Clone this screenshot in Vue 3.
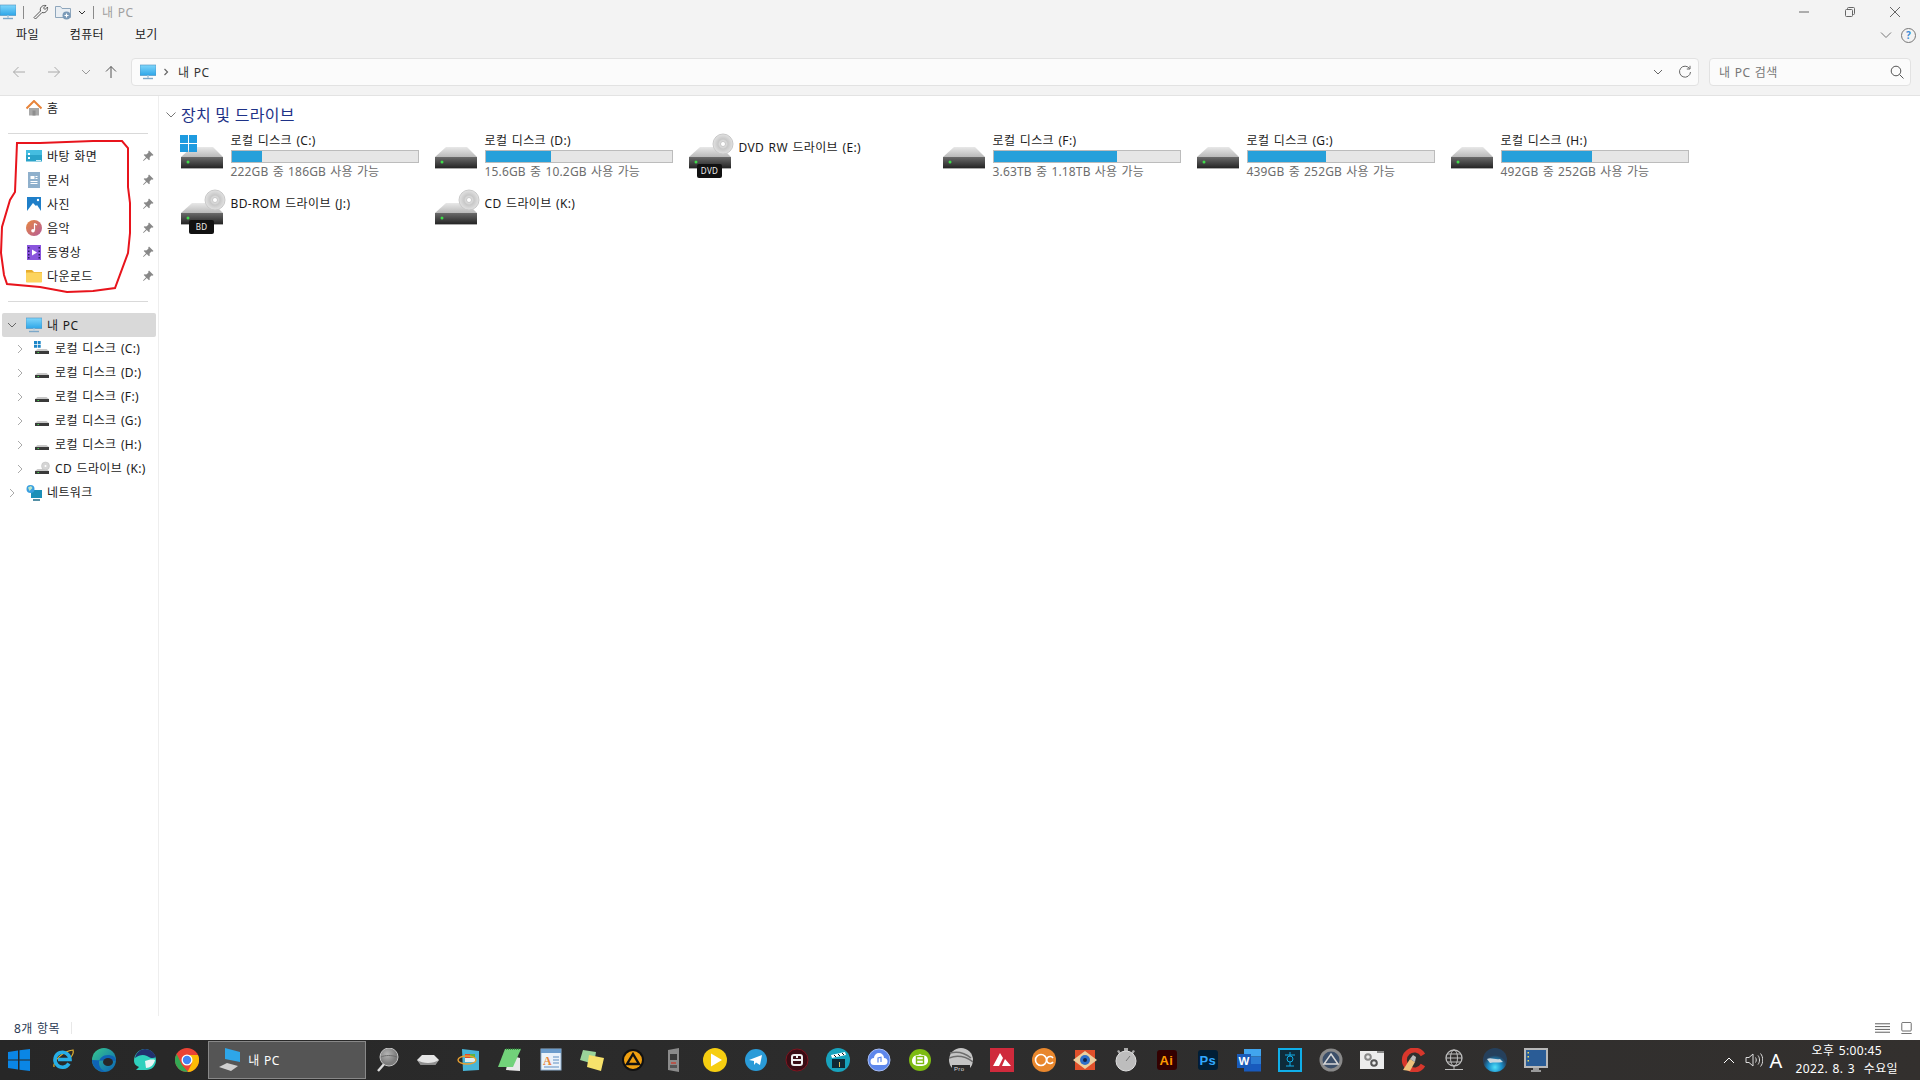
<script setup>
const quickItems = [
  { label: '바탕 화면', icon: 'i-desktop' },
  { label: '문서', icon: 'i-docs' },
  { label: '사진', icon: 'i-photos' },
  { label: '음악', icon: 'i-music' },
  { label: '동영상', icon: 'i-video' },
  { label: '다운로드', icon: 'i-folder' },
]

const treeDrives = [
  { label: '로컬 디스크 (C:)', icon: 'i-mini-win' },
  { label: '로컬 디스크 (D:)', icon: 'i-mini-drive' },
  { label: '로컬 디스크 (F:)', icon: 'i-mini-drive' },
  { label: '로컬 디스크 (G:)', icon: 'i-mini-drive' },
  { label: '로컬 디스크 (H:)', icon: 'i-mini-drive' },
  { label: 'CD 드라이브 (K:)', icon: 'i-mini-cd' },
]

const drives = [
  { name: '로컬 디스크 (C:)', used: 16.5, free: '222GB 중 186GB 사용 가능', icon: 'd-win' },
  { name: '로컬 디스크 (D:)', used: 35, free: '15.6GB 중 10.2GB 사용 가능', icon: 'd-hdd' },
  { name: 'DVD RW 드라이브 (E:)', icon: 'd-disc', badge: 'DVD' },
  { name: '로컬 디스크 (F:)', used: 66.5, free: '3.63TB 중 1.18TB 사용 가능', icon: 'd-hdd' },
  { name: '로컬 디스크 (G:)', used: 42, free: '439GB 중 252GB 사용 가능', icon: 'd-hdd' },
  { name: '로컬 디스크 (H:)', used: 48.5, free: '492GB 중 252GB 사용 가능', icon: 'd-hdd' },
  { name: 'BD-ROM 드라이브 (J:)', icon: 'd-disc', badge: 'BD' },
  { name: 'CD 드라이브 (K:)', icon: 'd-disc' },
]

const pinnedLeft = ['t-ie', 't-edge', 't-whale', 't-chrome']
const pinnedRight = [
  't-lens', 't-drive', 't-setup', 't-notepad', 't-wordpad', 't-notes', 't-aimp', 't-device',
  't-play', 't-telegram', 't-ar', 't-clap', 't-cloud', 't-green', 't-pro', 't-red', 't-oc',
  't-eye', 't-watch', 't-ai', 't-ps', 't-word', 't-frame', 't-steel', 't-gear', 't-ccleaner',
  't-net', 't-earth', 't-screen',
]
</script>

<template>
  <div class="window">
    <svg class="defs" width="0" height="0" aria-hidden="true">
      <defs>
        <linearGradient id="g-front" x1="0" y1="0" x2="0" y2="1"><stop offset="0" stop-color="#6a6a6a" /><stop offset="1" stop-color="#1f1f1f" /></linearGradient>
        <linearGradient id="g-top" x1="0" y1="0" x2="0" y2="1"><stop offset="0" stop-color="#e8e8e8" /><stop offset="1" stop-color="#b9b9b9" /></linearGradient>
        <linearGradient id="g-screen" x1="0" y1="0" x2="0" y2="1"><stop offset="0" stop-color="#7fd6fb" /><stop offset="1" stop-color="#2ea6e8" /></linearGradient>
        <linearGradient id="g-music" x1="0" y1="0" x2="1" y2="1"><stop offset="0" stop-color="#e8883f" /><stop offset="1" stop-color="#b55c9a" /></linearGradient>
        <linearGradient id="g-edge" x1="0" y1="0" x2="1" y2="1"><stop offset="0" stop-color="#37c98c" /><stop offset="1" stop-color="#0b62b8" /></linearGradient>
        <radialGradient id="g-disc"><stop offset="0" stop-color="#fff" /><stop offset=".5" stop-color="#c8c8c8" /><stop offset="1" stop-color="#e2e2e2" /></radialGradient>
        <radialGradient id="g-lens" cx=".4" cy=".35"><stop offset="0" stop-color="#b5b5b5" /><stop offset="1" stop-color="#7d7d7d" /></radialGradient>
        <radialGradient id="g-earth" cx=".5" cy=".8"><stop offset="0" stop-color="#4fe0fa" /><stop offset=".55" stop-color="#1b8fc9" /><stop offset="1" stop-color="#25405c" /></radialGradient>

        <!-- 탐색기 드라이브 아이콘 -->
        <symbol id="d-hdd" viewBox="0 0 48 48">
          <path d="M14 17h21l10 10H3z" fill="url(#g-top)" />
          <rect x="3" y="27" width="42" height="12" fill="url(#g-front)" />
          <path d="M3 38.500h42" stroke="#aaa" />
          <circle cx="10" cy="32" r="1.500" fill="#3fdc4a" />
        </symbol>
        <symbol id="d-win" viewBox="0 0 48 48">
          <use href="#d-hdd" width="48" height="48" />
          <path d="M2 5h8v8H2zM11 5h8v8h-8zM2 14h8v8H2zM11 14h8v8h-8z" fill="#1e9be0" />
        </symbol>
        <symbol id="d-disc" viewBox="0 0 48 48">
          <use href="#d-hdd" width="48" height="48" />
          <circle cx="37" cy="14" r="10" fill="url(#g-disc)" stroke="#c9c9c9" />
          <circle cx="37" cy="14" r="2.500" fill="#fff" stroke="#aaa" stroke-width=".6" />
        </symbol>

        <!-- 트리 아이콘 -->
        <symbol id="i-pc" viewBox="0 0 16 16">
          <rect x="0" y="1" width="16" height="10.500" fill="url(#g-screen)" stroke="#4a8fc0" stroke-width=".6" />
          <path d="M3 14.500h10" stroke="#7da7c7" stroke-width="1.400" />
          <path d="M7 11.500h2v2.500H7z" fill="#b6cfe0" />
        </symbol>
        <symbol id="i-home" viewBox="0 0 16 16">
          <path d="M3 8h10v7.500H3z" fill="#a8a8a8" />
          <path d="M6.500 10.500h3v5h-3z" fill="#8e8e8e" />
          <path d="M.5 8.500 8 1l7.500 7.500" fill="none" stroke="#e8843a" stroke-width="2" />
        </symbol>
        <symbol id="i-desktop" viewBox="0 0 16 16">
          <rect y="2" width="16" height="11.500" fill="#2aa3c9" />
          <path d="M0 2h16v5H0z" fill="#45bde0" />
          <path d="M2 5h2v2H2zM2 9h2v2H2z" fill="#fff" />
          <path d="M10 12h5v1h-5z" fill="#cfeef7" />
        </symbol>
        <symbol id="i-docs" viewBox="0 0 16 16">
          <rect x="2" y="0" width="12" height="16" fill="#8fb0cc" />
          <path d="M4.500 4h4v3h-4zM9.500 4h2v1h-2zM9.500 6h2v1h-2zM4.500 9h7v1h-7zM4.500 11h7v1h-7z" fill="#fff" />
        </symbol>
        <symbol id="i-photos" viewBox="0 0 16 16">
          <rect x="1" y="1" width="14" height="14" fill="#1f7fc9" />
          <path d="M1 15 7 7l3 3 1-1 4 6z" fill="#fff" />
          <circle cx="12" cy="4" r="1.200" fill="#fff" />
        </symbol>
        <symbol id="i-music" viewBox="0 0 16 16">
          <circle cx="8" cy="8" r="8" fill="url(#g-music)" />
          <path d="M8.500 3.500v7" stroke="#fff" stroke-width="1.200" />
          <circle cx="7" cy="10.800" r="1.800" fill="#fff" />
          <path d="M8.500 3.500 11 5" stroke="#fff" stroke-width="1.200" />
        </symbol>
        <symbol id="i-video" viewBox="0 0 16 16">
          <rect x="1" y="1" width="14" height="15" fill="#8a55dd" />
          <path d="M2 3h1.500v1.500H2zM2 6.500h1.500V8H2zM2 10h1.500v1.500H2zM2 13h1.500v1.500H2zM12.500 3H14v1.500h-1.500zM12.500 6.500H14V8h-1.500zM12.500 10H14v1.500h-1.500zM12.500 13H14v1.500h-1.500z" fill="#2b1a66" />
          <path d="M6 5.500 11 8.500 6 11.500z" fill="#fff" />
        </symbol>
        <symbol id="i-folder" viewBox="0 0 16 16">
          <path d="M0 2h6l2 2h8v3H0z" fill="#e8ae2e" />
          <rect y="4.500" width="16" height="10" rx=".8" fill="#fcd45f" />
        </symbol>
        <symbol id="i-network" viewBox="0 0 16 16">
          <rect x="5" y="5" width="11" height="8" fill="#1b8fb8" />
          <path d="M7 15h7" stroke="#1b6b88" stroke-width="1.500" />
          <circle cx="4.500" cy="4" r="4" fill="#3a9fe0" />
          <path d="M2 2.500 5 1l1.500 2-3 3z" fill="#bfe6c6" />
        </symbol>
        <symbol id="i-mini-drive" viewBox="0 0 16 16">
          <path d="M3.500 8h9l2.500 2H1z" fill="#c8c8c8" />
          <rect x="1" y="10" width="14" height="3" fill="#3a3a3a" />
          <path d="M3.500 11.500H5" stroke="#43d04d" />
        </symbol>
        <symbol id="i-mini-win" viewBox="0 0 16 16">
          <use href="#i-mini-drive" width="16" height="16" />
          <path d="M0 0h3v3H0zM3.700 0h3v3h-3zM0 3.700h3v3H0zM3.700 3.700h3v3h-3z" fill="#1b85c7" />
        </symbol>
        <symbol id="i-mini-cd" viewBox="0 0 16 16">
          <use href="#i-mini-drive" width="16" height="16" />
          <circle cx="11.500" cy="5" r="4" fill="#d5d5d5" stroke="#bdbdbd" stroke-width=".5" />
          <circle cx="11.500" cy="5" r="1" fill="#fff" />
        </symbol>

        <!-- 작업 표시줄 아이콘 -->
        <symbol id="t-ie" viewBox="0 0 24 24">
          <path d="M3 19C2 13 12 3 22 2c1 3-1 6-3 8" fill="none" stroke="#e0b030" stroke-width="1.200" />
          <path d="M18 15.500a7.500 7.500 0 1 1 1-4H7" fill="none" stroke="#27aee6" stroke-width="3.600" />
        </symbol>
        <symbol id="t-edge" viewBox="0 0 24 24">
          <circle cx="12" cy="12" r="12" fill="url(#g-edge)" />
          <path d="M24 13c0-4-4-6-8-6-5 0-9 3-9 8 0 4 3 8 8 9-8 1-15-5-15-12" fill="#0f63b5" />
          <ellipse cx="16" cy="14" rx="5" ry="4" fill="#282828" />
        </symbol>
        <symbol id="t-whale" viewBox="0 0 24 24">
          <path d="M1 13C1 6 6 1 12 1s11 5 11 11-4 10-10 10H3l3-3c-3-1-5-3-5-6z" fill="#2fd0bd" />
          <path d="M2 10C3 5 7 1 12 1c5 0 9 3 11 8-3 2-6 1-9-1-4-2-8-1-12 2z" fill="#22306f" />
          <path d="M12 13c3-1 7-2 10-1-1 5-5 8-9 8z" fill="#eaf6f5" />
        </symbol>
        <symbol id="t-chrome" viewBox="0 0 24 24">
          <circle cx="12" cy="12" r="12" fill="#ea4335" />
          <path d="M1.600 6 7 17l6 7h-1A12 12 0 0 1 1.600 6z" fill="#34a853" />
          <path d="M12 7h11a12 12 0 0 1-10.500 17L17 15z" fill="#fbbc05" />
          <circle cx="12" cy="12" r="5.500" fill="#fff" />
          <circle cx="12" cy="12" r="4.200" fill="#4285f4" />
        </symbol>
        <symbol id="t-lens" viewBox="0 0 24 24">
          <path d="M3 23l7-8" stroke="#ddd" stroke-width="2.400" />
          <circle cx="14" cy="9" r="9" fill="url(#g-lens)" stroke="#c6c6c6" />
          <path d="M6 9c4-2 11-2 16 0" fill="none" stroke="#6d6d6d" />
        </symbol>
        <symbol id="t-drive" viewBox="0 0 24 24">
          <path d="M6 7h12l5 5-4 5H5l-4-5z" fill="#e5e5e5" />
          <path d="M1 12c6 4 16 4 22 0l-4 5H5z" fill="#8f8f8f" />
        </symbol>
        <symbol id="t-setup" viewBox="0 0 24 24">
          <path d="M5 1 22 3v19L6 23z" fill="#48b5d8" />
          <path d="M8 6h10v8H8z" fill="#dfeef3" />
          <path d="M8 6h5v4H8z" fill="#e04a2a" /><path d="M13 6h5v4h-5z" fill="#63b43f" />
          <ellipse cx="10" cy="12" rx="9" ry="4" fill="none" stroke="#e8a032" stroke-width="1.400" />
        </symbol>
        <symbol id="t-notepad" viewBox="0 0 24 24">
          <path d="M11 7 22 10v13l-14-1z" fill="#e8e8e8" />
          <path d="M7 1h16l-8 18H0z" fill="#72d27a" />
          <path d="M8 1h14.500" stroke="#2f7a38" stroke-dasharray="1 1" stroke-width="1.500" />
        </symbol>
        <symbol id="t-wordpad" viewBox="0 0 24 24">
          <rect x="2" y="1" width="20" height="21" fill="#e9f2fa" stroke="#8fb1d2" />
          <path d="M2 1h20v4H2z" fill="#6b9ccc" />
          <text x="4" y="17" font-size="12" font-weight="700" fill="#e8893a" font-family="Liberation Serif, serif">A</text>
          <path d="M14 9h6M14 12h6M14 15h6M5 19h15" stroke="#5e8fc2" />
        </symbol>
        <symbol id="t-notes" viewBox="0 0 24 24">
          <path d="M3 2 16 4 14 16 0 12z" fill="#9ad49a" />
          <path d="M9 7 24 10 21 23 7 19z" fill="#f7e26b" />
        </symbol>
        <symbol id="t-aimp" viewBox="0 0 24 24">
          <circle cx="12" cy="12" r="11" fill="#111" />
          <circle cx="12" cy="12" r="9" fill="#f0a010" />
          <path d="M12 6 18 16H6z" fill="none" stroke="#111" stroke-width="2.400" />
        </symbol>
        <symbol id="t-device" viewBox="0 0 24 24">
          <path d="M6 2 17 0v24L6 22z" fill="#8b8b8b" />
          <path d="M8 6h7v6H8z" fill="#3a3a3a" /><path d="M9 14h5v2H9z" fill="#b5564c" /><path d="M8 17h7v3H8z" fill="#555" />
        </symbol>
        <symbol id="t-play" viewBox="0 0 24 24">
          <circle cx="12" cy="12" r="12" fill="#f6ce11" />
          <path d="M8 5.500 19 12 8 18.500z" fill="#fff" />
        </symbol>
        <symbol id="t-telegram" viewBox="0 0 24 24">
          <circle cx="12" cy="12" r="11" fill="#2a9bd8" />
          <path d="M5 12 18 7 16 17 12 14.500 10 17 10 13z" fill="#fff" />
        </symbol>
        <symbol id="t-ar" viewBox="0 0 24 24">
          <circle cx="12" cy="12" r="11" fill="#3a0d14" stroke="#7d1520" />
          <rect x="7" y="7" width="10" height="10" rx="2" fill="none" stroke="#eee" stroke-width="2" />
          <path d="M7 12h10M12 7v3" stroke="#eee" stroke-width="2" />
        </symbol>
        <symbol id="t-clap" viewBox="0 0 24 24">
          <circle cx="12" cy="12" r="12" fill="#18a3bd" />
          <path d="M6 11h13v9H6z" fill="#102a35" />
          <path d="M5 7 19 4l1 3-14 3z" fill="#fff" />
          <path d="M8 7l2 2M12 6l2 2M16 5l2 2" stroke="#111" />
          <path d="M13 14h1v5h-1z" fill="#e0c060" />
        </symbol>
        <symbol id="t-cloud" viewBox="0 0 24 24">
          <circle cx="12" cy="12" r="11" fill="#5d87ec" stroke="#a7bef5" />
          <path d="M7 17a3.500 3.500 0 0 1 0-7 5 5 0 0 1 10 0 3.500 3.500 0 0 1 0 7z" fill="#fff" />
          <path d="M11 14.500V10l3-.8V14" fill="none" stroke="#5d87ec" stroke-width="1.200" />
        </symbol>
        <symbol id="t-green" viewBox="0 0 24 24">
          <circle cx="12" cy="12" r="11" fill="#7dbb12" />
          <path d="M4 13c0-4 3-6 6-6l2-1 2 1c4 0 6 2 6 6 0 3-3 5-8 5s-8-2-8-5z" fill="#fff" />
          <rect x="8.500" y="8.500" width="7" height="7" fill="none" stroke="#7dbb12" stroke-width="1.400" />
          <path d="M8.500 12h7" stroke="#7dbb12" stroke-width="1.400" />
        </symbol>
        <symbol id="t-pro" viewBox="0 0 24 24">
          <circle cx="12" cy="12" r="12" fill="#c5c5c5" />
          <path d="M0 10c8-3 16-2 24 4M1 5c8-2 15 0 21 5" stroke="#6d6d6d" fill="none" stroke-width="1.500" />
          <rect x="3" y="17" width="18" height="7" fill="#2c2c2c" />
          <text x="5" y="23" font-size="6" fill="#ddd" font-family="Liberation Sans, sans-serif">Pro</text>
        </symbol>
        <symbol id="t-red" viewBox="0 0 24 24">
          <rect width="24" height="24" fill="#cf2a3c" />
          <path d="M3 18 10 5l3 5-4 8zM12 18l3-7 6 7z" fill="#fff" />
        </symbol>
        <symbol id="t-oc" viewBox="0 0 24 24">
          <circle cx="12" cy="12" r="12" fill="#e8872d" />
          <circle cx="9" cy="12" r="5.500" fill="none" stroke="#fff" stroke-width="1.600" />
          <path d="M21 10a3.500 3.500 0 1 0 0 4" fill="none" stroke="#fff" stroke-width="1.600" />
        </symbol>
        <symbol id="t-eye" viewBox="0 0 24 24">
          <rect x="2" y="2" width="20" height="20" fill="#e0502a" />
          <path d="M0 12 12 3l12 9-12 9z" fill="#eccf9f" />
          <circle cx="12" cy="12" r="5" fill="#2f6fc9" />
          <circle cx="12" cy="12" r="2" fill="#12234a" />
        </symbol>
        <symbol id="t-watch" viewBox="0 0 24 24">
          <path d="M10 0h4v3h-4zM3 3l2-1 2 3-2 1zM21 3l-2-1-2 3 2 1z" fill="#aaa" />
          <circle cx="12" cy="13" r="10" fill="#bdbdbd" stroke="#e0e0e0" />
          <path d="M12 13 16 8" stroke="#777" />
        </symbol>
        <symbol id="t-ai" viewBox="0 0 24 24">
          <rect x="2" y="2" width="20" height="20" rx="3" fill="#330000" />
          <text x="4.500" y="17" font-size="13" font-weight="700" fill="#ff9a00" font-family="Liberation Sans, sans-serif">Ai</text>
        </symbol>
        <symbol id="t-ps" viewBox="0 0 24 24">
          <rect x="2" y="2" width="20" height="20" rx="3" fill="#001e36" />
          <text x="3.500" y="17" font-size="13" font-weight="700" fill="#31a8ff" font-family="Liberation Sans, sans-serif">Ps</text>
        </symbol>
        <symbol id="t-word" viewBox="0 0 24 24">
          <rect x="7" y="1" width="17" height="7.500" fill="#41a5ee" />
          <rect x="7" y="8.500" width="17" height="7.500" fill="#2b7cd3" />
          <rect x="7" y="16" width="17" height="7.500" fill="#185abd" />
          <rect y="6" width="14" height="14" fill="#1a5bb8" />
          <text x="1.500" y="17" font-size="11.500" font-weight="700" fill="#fff" font-family="Liberation Sans, sans-serif">W</text>
        </symbol>
        <symbol id="t-frame" viewBox="0 0 24 24">
          <rect x="1" y="1" width="22" height="22" fill="#0e2b3a" stroke="#10aee8" stroke-width="2" />
          <circle cx="12" cy="11" r="3" fill="none" stroke="#10aee8" />
          <path d="M7 7h10M12 4v4M8 18h8M12 14v4" stroke="#10aee8" />
        </symbol>
        <symbol id="t-steel" viewBox="0 0 24 24">
          <circle cx="12" cy="12" r="11.500" fill="#8a8a8a" />
          <circle cx="12" cy="12" r="8.500" fill="#3c4f69" />
          <path d="M12 6 19 16H5z" fill="none" stroke="#d8d8d8" stroke-width="1.500" />
        </symbol>
        <symbol id="t-gear" viewBox="0 0 24 24">
          <rect y="3" width="24" height="18" fill="#ececec" />
          <path d="M17 3h7v2h-7z" fill="#888" />
          <circle cx="8" cy="9" r="2.800" fill="none" stroke="#8a8a8a" stroke-width="2" />
          <circle cx="14" cy="15" r="2.800" fill="none" stroke="#555" stroke-width="2" />
        </symbol>
        <symbol id="t-ccleaner" viewBox="0 0 24 24">
          <path d="M22 7a10 10 0 1 0 0 10" fill="none" stroke="#d8372c" stroke-width="5" />
          <path d="M2 22 9 11l5 3-5 9z" fill="#eec17b" />
          <path d="M9 11l3-4 3 2-1 5z" fill="#bbb" />
        </symbol>
        <symbol id="t-net" viewBox="0 0 24 24">
          <circle cx="12" cy="10" r="8" fill="none" stroke="#bdbdbd" stroke-width="1.300" />
          <ellipse cx="12" cy="10" rx="3.500" ry="8" fill="none" stroke="#bdbdbd" />
          <path d="M4 10h16M5 6h14M5 14h14M12 18v3M3 21.500h18" stroke="#bdbdbd" />
        </symbol>
        <symbol id="t-earth" viewBox="0 0 24 24">
          <circle cx="12" cy="12" r="12" fill="url(#g-earth)" />
          <path d="M4 11c4-2 8 1 13 0l3 3c-5 1-9 0-13 1z" fill="#c9d6de" />
        </symbol>
        <symbol id="t-screen" viewBox="0 0 24 24">
          <rect width="24" height="20" fill="#b8b8b8" />
          <rect x="2" y="2" width="20" height="16" fill="#2a5c96" />
          <path d="M3.500 4h1.500v1.500H3.500zM3.500 8h1.500v1.500H3.500zM3.500 12h1.500v1.500H3.500z" fill="#e8d85a" />
          <path d="M9 20h6v2H9zM7 22h10v2H7z" fill="#999" />
        </symbol>
      </defs>
    </svg>

    <div class="titlebar">
      <div class="quick">
        <svg class="ic16"><use href="#i-pc" /></svg>
        <span class="pipe" />
        <svg class="qa wrench" viewBox="0 0 16 16" fill="none" stroke="#555" stroke-width="1">
          <path d="M1 13.500 7.500 7C6.500 4 9 .8 13 1.500L10.500 4l1.500 1.500L14.500 3c.7 4-2.500 6.500-5.500 5.500L2.500 15z" />
        </svg>
        <svg class="qa" viewBox="0 0 16 16">
          <path d="M.5 2.500h5l1.500 2h8.500v9H.5z" fill="#e9eef3" stroke="#8ea6bc" />
          <circle cx="11.500" cy="11.500" r="4" fill="#7a9ab8" />
          <path d="M9.500 11.500h4M11.500 9.500v4" stroke="#fff" stroke-width="1.200" />
        </svg>
        <svg class="mini-chev" viewBox="0 0 8 5"><path d="M1 1l3 3 3-3" fill="none" stroke="#333" stroke-width="1" /></svg>
        <span class="pipe last" />
        <span class="title-text">내 PC</span>
      </div>
      <div class="win-ctrls">
        <svg class="wc" viewBox="0 0 12 12"><path d="M1 6h10" stroke="#666" /></svg>
        <svg class="wc" viewBox="0 0 12 12" fill="none" stroke="#666"><rect x="1.500" y="3.500" width="7" height="7" rx="1" /><path d="M3.500 3.500v-1a1 1 0 0 1 1-1h5a1 1 0 0 1 1 1v5a1 1 0 0 1-1 1h-1" /></svg>
        <svg class="wc" viewBox="0 0 12 12"><path d="M1 1l10 10M11 1 1 11" stroke="#666" /></svg>
      </div>
    </div>

    <div class="menubar">
      <span class="menu">파일</span>
      <span class="menu">컴퓨터</span>
      <span class="menu">보기</span>
      <div class="ribbon-right">
        <svg class="ribbon-chev" viewBox="0 0 12 8"><path d="M1 1.500l5 5 5-5" fill="none" stroke="#777" /></svg>
        <span class="help">?</span>
      </div>
    </div>

    <div class="addressbar">
      <svg class="nav-btn" viewBox="0 0 14 14" fill="none" stroke="#aaa"><path d="M13 7H1.500M6.500 2l-5 5 5 5" /></svg>
      <svg class="nav-btn fwd" viewBox="0 0 14 14" fill="none" stroke="#aaa"><path d="M1 7h11.500M7.500 2l5 5-5 5" /></svg>
      <svg class="nav-down" viewBox="0 0 10 6" fill="none" stroke="#999"><path d="M1 1l4 4 4-4" /></svg>
      <svg class="nav-btn up" viewBox="0 0 14 14" fill="none" stroke="#555"><path d="M7 13V1.500M2 6.500l5-5 5 5" /></svg>
      <div class="address">
        <svg class="ic16"><use href="#i-pc" /></svg>
        <svg class="crumb" viewBox="0 0 6 8" fill="none" stroke="#666" stroke-width="1.200"><path d="M1.500 1l3 3-3 3" /></svg>
        <span class="path">내 PC</span>
        <svg class="addr-chev" viewBox="0 0 10 6" fill="none" stroke="#666"><path d="M1 1l4 4 4-4" /></svg>
        <svg class="refresh" viewBox="0 0 14 14" fill="none" stroke="#666"><path d="M11.500 3.500A5.500 5.500 0 1 0 12.500 7M12 .8v3.200H8.800" /></svg>
      </div>
      <div class="search">
        <span>내 PC 검색</span>
        <svg class="search-ic" viewBox="0 0 14 14" fill="none" stroke="#555"><circle cx="6" cy="6" r="4.800" /><path d="M9.500 9.500l4 4" /></svg>
      </div>
    </div>

    <div class="main">
      <aside class="side">
        <div class="row top"><svg class="ic16"><use href="#i-home" /></svg><span>홈</span></div>
        <div class="divider first" />
        <div v-for="q in quickItems" :key="q.label" class="row top">
          <svg class="ic16"><use :href="'#' + q.icon" /></svg>
          <span>{{ q.label }}</span>
          <svg class="pin" viewBox="0 0 12 12"><path d="M7 .5 11.500 5l-1.200.8-1-.2L7.500 7.800 7.800 9.500 7 10.300 4.800 8 1.500 11 1 10.500 4 7.200 1.700 5l.8-.8 1.700.3L6.400 2.700l-.2-1z" fill="#888" /></svg>
        </div>
        <div class="divider second" />
        <div class="row top selected">
          <svg class="tw" viewBox="0 0 10 10" fill="none" stroke="#666"><path d="M1 3l4 4 4-4" /></svg>
          <svg class="ic16"><use href="#i-pc" /></svg>
          <span>내 PC</span>
        </div>
        <div v-for="d in treeDrives" :key="d.label" class="row child">
          <svg class="tw" viewBox="0 0 10 10" fill="none" stroke="#aaa"><path d="M3 1l4 4-4 4" /></svg>
          <svg class="ic16"><use :href="'#' + d.icon" /></svg>
          <span>{{ d.label }}</span>
        </div>
        <div class="row top network">
          <svg class="tw" viewBox="0 0 10 10" fill="none" stroke="#aaa"><path d="M3 1l4 4-4 4" /></svg>
          <svg class="ic16"><use href="#i-network" /></svg>
          <span>네트워크</span>
        </div>

        <!-- 스크린샷에 손으로 그린 빨간 표시 -->
        <svg class="scribble" width="140" height="175" viewBox="0 0 140 175">
          <path d="M17 23 40 23 93 21 122 21 128 28 128 67 130 83 130 113 128 133 115 168 93 171 67 172 40 167 7 164 4 155 1 133 2 107 10 80 15 72z" fill="none" stroke="#e8141c" stroke-width="2" />
        </svg>
      </aside>

      <section class="content">
        <div class="group">
          <svg class="group-chev" viewBox="0 0 10 6" fill="none" stroke="#777"><path d="M.5.5 5 5 9.500.5" /></svg>
          <span>장치 및 드라이브</span>
        </div>
        <div class="tiles">
          <div v-for="d in drives" :key="d.name" class="tile">
            <div class="tile-icon">
              <svg width="48" height="48"><use :href="'#' + d.icon" /></svg>
              <span v-if="d.badge" class="badge">{{ d.badge }}</span>
            </div>
            <div class="tile-body" :class="{ plain: d.used === undefined }">
              <div class="tile-name">{{ d.name }}</div>
              <template v-if="d.used !== undefined">
                <div class="bar"><div class="bar-fill" :style="{ width: d.used + '%' }" /></div>
                <div class="tile-free">{{ d.free }}</div>
              </template>
            </div>
          </div>
        </div>
      </section>
    </div>

    <div class="statusbar">
      <span class="count">8개 항목</span>
      <span class="status-sep" />
      <div class="views">
        <svg class="view" viewBox="0 0 16 12" stroke="#555"><path d="M0 1.500h16M0 4.500h16M0 7.500h16M0 10.500h16" /></svg>
        <svg class="view" viewBox="0 0 14 14" fill="none" stroke="#555"><rect x="1.500" y=".5" width="11" height="10" rx="1" /><path d="M1 13.500h12" /></svg>
      </div>
    </div>

    <footer class="taskbar">
      <svg class="start" viewBox="0 0 22 22"><path d="M0 3 10 1.500V10.500H0zM11.500 1.300 22 0V10.500H11.500zM0 11.500H10V20.500L0 19zM11.500 11.500H22V22L11.500 20.700z" fill="#0a86e6" /></svg>
      <div v-for="t in pinnedLeft" :key="t" class="tb-icon"><svg width="24" height="24"><use :href="'#' + t" /></svg></div>
      <div class="task-btn">
        <svg class="task-ic" viewBox="0 0 24 24">
          <path d="M7 0 22 4v10L7 11z" fill="#2ea6e8" />
          <path d="M1 19l8-4 11 3-7 5z" fill="#cfcfcf" />
        </svg>
        <span>내 PC</span>
      </div>
      <div class="right-icons">
        <div v-for="t in pinnedRight" :key="t" class="tb-icon"><svg width="24" height="24"><use :href="'#' + t" /></svg></div>
      </div>
      <div class="tray">
        <svg class="tray-up" viewBox="0 0 12 7" fill="none" stroke="#fff"><path d="M1 6l5-5 5 5" /></svg>
        <svg class="tray-sound" viewBox="0 0 18 16" fill="none" stroke="#ddd"><path d="M1 5.500h3L8 2v12L4 10.500H1zM10.500 5.500c1 1.500 1 3.500 0 5M13 3.500c2 2.500 2 6.500 0 9M15.500 1.500c3 3.500 3 9.500 0 13" /></svg>
        <span class="ime">A</span>
        <div class="clock">
          <div>오후 5:00:45</div>
          <div>2022. 8. 3&nbsp; 수요일</div>
        </div>
      </div>
    </footer>
  </div>
</template>

<style>
body {
  overflow: hidden;
}
</style>

<style scoped>
.window {
  width: 1920px;
  height: 1080px;
  display: flex;
  flex-direction: column;
  background: #fff;
  font-family: "Noto Sans", "Noto Sans CJK KR", sans-serif;
  font-size: 12px;
  letter-spacing: .35px;
  word-spacing: 1px;
  color: #1a1a1a;
}
.defs {
  position: absolute;
}
svg {
  display: block;
  flex: none;
}
.ic16 {
  width: 16px;
  height: 16px;
}

/* top chrome */
.titlebar {
  height: 24px;
  background: #f3f3f3;
  display: flex;
  align-items: center;
  justify-content: space-between;
}
.quick {
  display: flex;
  align-items: center;
}
.pipe {
  width: 1px;
  height: 13px;
  background: #8a8a8a;
  margin: 0 9px 0 7px;
}
.pipe.last {
  margin-right: 8px;
}
.qa {
  width: 16px;
  height: 16px;
  margin-right: 6px;
}
.mini-chev {
  width: 8px;
  height: 5px;
  margin: 0 0 0 1px;
}
.title-text {
  color: #a0a0a0;
}
.win-ctrls {
  display: flex;
  gap: 33.500px;
  padding-right: 19px;
}
.wc {
  width: 12px;
  height: 12px;
}
.menubar {
  height: 22px;
  background: #f3f3f3;
  display: flex;
  align-items: center;
  padding-left: 16px;
  padding-bottom: 2px;
  box-sizing: border-box;
}
.menu {
  margin-right: 31px;
}
.ribbon-right {
  margin-left: auto;
  display: flex;
  align-items: center;
  gap: 9px;
  padding-right: 4px;
  padding-top: 2px;
}
.ribbon-chev {
  width: 12px;
  height: 8px;
}
.help {
  width: 13px;
  height: 13px;
  border: 1px solid #777;
  border-radius: 50%;
  color: #3c8fd8;
  font-size: 10px;
  line-height: 13px;
  text-align: center;
  font-weight: 700;
}
.addressbar {
  height: 50px;
  box-sizing: border-box;
  background: #f3f3f3;
  border-bottom: 1px solid #e3e3e3;
  display: flex;
  align-items: center;
  padding: 2px 9px 0 12px;
}
.nav-btn {
  width: 14px;
  height: 14px;
}
.fwd {
  margin-left: 21px;
}
.nav-down {
  width: 10px;
  height: 6px;
  margin-left: 20px;
}
.up {
  margin-left: 13px;
}
.address {
  flex: 1;
  margin-left: 13px;
  height: 28px;
  box-sizing: border-box;
  background: #fbfbfb;
  border: 1px solid #e2e2e2;
  border-radius: 4px;
  display: flex;
  align-items: center;
  padding: 0 6px 0 8px;
}
.crumb {
  width: 6px;
  height: 8px;
  margin: 0 9px 0 7px;
}
.path {
  color: #333;
}
.addr-chev {
  width: 10px;
  height: 6px;
  margin-left: auto;
}
.refresh {
  width: 14px;
  height: 14px;
  margin-left: 15px;
}
.search {
  width: 202px;
  height: 28px;
  margin-left: 10px;
  box-sizing: border-box;
  background: #fbfbfb;
  border: 1px solid #e2e2e2;
  border-radius: 4px;
  display: flex;
  align-items: center;
  justify-content: space-between;
  padding: 0 6px 0 9px;
  color: #777;
}
.search-ic {
  width: 14px;
  height: 14px;
}

/* body */
.main {
  flex: 1;
  min-height: 0;
  display: flex;
}
.side {
  position: relative;
  width: 159px;
  box-sizing: border-box;
  border-right: 1px solid #eee;
  padding-right: 2px;
}
.row {
  height: 24px;
  display: flex;
  align-items: center;
  margin-left: 2px;
  position: relative;
}
.row.top {
  padding-left: 24px;
}
.row.child {
  padding-left: 32px;
}
.row > span {
  margin-left: 5px;
}
.row.child > span,
.row.network > span {
  padding-bottom: 2px;
}
.row .tw {
  position: absolute;
  width: 10px;
  height: 10px;
  left: 5px;
}
.row.child .tw {
  left: 13px;
}
.selected {
  background: #d9d9d9;
  border-radius: 2px;
}
.pin {
  position: absolute;
  left: 140px;
  width: 12px;
  height: 12px;
}
.divider {
  height: 1px;
  background: #d9d9d9;
  margin: 0 8px;
}
.divider.first {
  margin-top: 13px;
  margin-bottom: 10px;
}
.divider.second {
  margin-top: 13px;
  margin-bottom: 11px;
}
.scribble {
  position: absolute;
  left: 0;
  top: 24px;
  pointer-events: none;
}
.content {
  flex: 1;
  padding-left: 20px;
}
.group {
  height: 36px;
  display: flex;
  align-items: center;
  color: #1e3287;
  font-size: 16px;
  letter-spacing: .25px;
  word-spacing: 0;
}
.group-chev {
  width: 10px;
  height: 6px;
  margin: 2px 5px 0 -13px;
}
.tiles {
  display: grid;
  grid-template-columns: repeat(6, 254px);
  grid-auto-rows: 56px;
  margin-left: -1px;
  margin-top: -2px;
}
.tile {
  display: flex;
  gap: 4.500px;
}
.tile-icon {
  position: relative;
  width: 48px;
  height: 48px;
}
.badge {
  position: absolute;
  left: 11px;
  top: 34px;
  width: 25px;
  height: 14px;
  background: #111;
  border-radius: 2px;
  color: #eee;
  font-size: 8px;
  line-height: 14px;
  text-align: center;
}
.tile-body {
  width: 188px;
  padding-top: 3px;
}
.tile-body.plain {
  padding-top: 10px;
}
.tile-name {
  height: 16px;
  line-height: 16px;
  white-space: nowrap;
}
.bar {
  margin-top: 1px;
  height: 13px;
  box-sizing: border-box;
  background: #e6e6e6;
  border: 1px solid #bcbcbc;
}
.bar-fill {
  height: 100%;
  background: #26a0da;
}
.tile-free {
  margin-top: 1px;
  height: 16px;
  line-height: 16px;
  color: #6d6d6d;
  white-space: nowrap;
  letter-spacing: .15px;
}
.statusbar {
  height: 24px;
  display: flex;
  align-items: center;
  padding-left: 14px;
  color: #2b3a55;
}
.count {
  width: 57px;
}
.status-sep {
  width: 1px;
  height: 12px;
  background: #e8e8e8;
}
.views {
  margin-left: auto;
  display: flex;
  align-items: center;
  gap: 9px;
  padding-right: 6px;
}
.view {
  width: 15px;
  height: 12px;
}

/* taskbar */
.taskbar {
  height: 40px;
  background: linear-gradient(90deg, #272727, #2d2d2d 50%, #33302e);
  display: flex;
  align-items: center;
  color: #fff;
}
.start {
  width: 22px;
  height: 22px;
  margin: 0 12.500px 0 8px;
}
.tb-icon {
  width: 41.200px;
  height: 40px;
  display: flex;
  align-items: center;
  justify-content: center;
}
.task-btn {
  width: 158px;
  height: 38px;
  box-sizing: border-box;
  margin-left: 1px;
  background: #555;
  border: 1px solid #888;
  display: flex;
  align-items: center;
  padding-left: 9px;
  gap: 6px;
}
.task-ic {
  width: 24px;
  height: 24px;
}
.right-icons {
  display: flex;
}
.right-icons .tb-icon {
  width: 41.050px;
}
.tray {
  flex: 1;
  display: flex;
  align-items: center;
  justify-content: flex-end;
  padding-right: 22px;
}
.tray-up {
  width: 12px;
  height: 7px;
}
.tray-sound {
  width: 18px;
  height: 16px;
  margin-left: 10px;
}
.ime {
  font-size: 20px;
  margin: 0 13px 0 6px;
}
.clock {
  text-align: center;
  line-height: 18px;
}
</style>
